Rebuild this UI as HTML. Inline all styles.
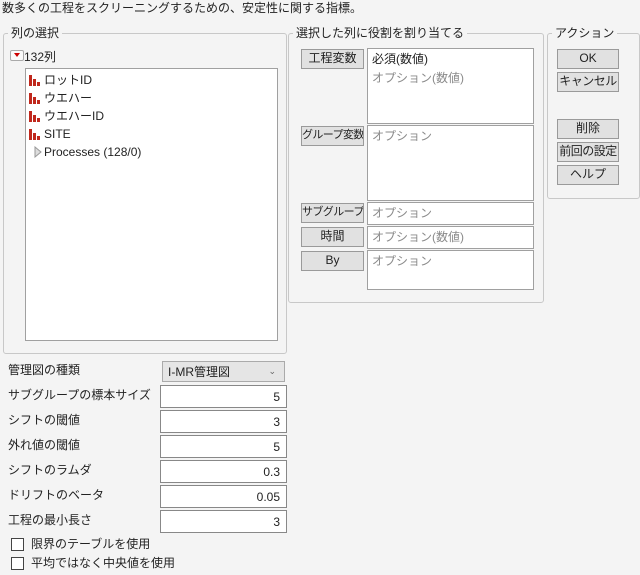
<!DOCTYPE html>
<html><head><meta charset="utf-8"><style>
*{box-sizing:border-box;margin:0;padding:0}
body{width:640px;height:575px;background:#f4f4f4;font-family:"Liberation Sans","Noto Sans CJK JP",sans-serif;font-size:12px;color:#222;position:relative;overflow:hidden}
.a{position:absolute;white-space:nowrap}
.grp{position:absolute;border:1px solid #c8c8c8;border-radius:3px}
.lg{position:absolute;background:#f4f4f4;padding:0 3px;top:-9px;left:4px;line-height:16px;white-space:nowrap}
.box{position:absolute;background:#fff;border:1px solid #a0a0a0}
.btn{position:absolute;background:#e1e1e1;border:1px solid #9a9a9a;text-align:center;line-height:17px;font-size:12px;white-space:nowrap;overflow:hidden}
.opt{color:#8a8a8a;padding:1px 4px;line-height:18px;white-space:nowrap}
.lbl{position:absolute;left:8px;line-height:16px;white-space:nowrap}
.fld{position:absolute;left:160px;width:127px;height:23px;background:#fff;border:1px solid #888;text-align:right;padding:3px 6px;line-height:16px}
.cb{position:absolute;left:11px;width:13px;height:13px;border:1px solid #444;background:#fff}
.ic{position:absolute;left:3px;width:12px;height:12px}
.row{position:absolute;left:0;height:18px;line-height:18px;white-space:nowrap;width:240px}
.row span{white-space:nowrap}
</style></head><body>
<div class="a" style="left:2px;top:0;line-height:17px">数多くの工程をスクリーニングするための、安定性に関する指標。</div>

<div class="grp" style="left:3px;top:33px;width:284px;height:321px">
<div class="lg">列の選択</div>
<div class="a" style="left:6px;top:16px;width:14px;height:11px;border:1px solid #aaa;border-radius:2px;background:#fafafa"><div style="position:absolute;left:3px;top:2px;border-left:3px solid transparent;border-right:3px solid transparent;border-top:4px solid #c00"></div></div>
<div class="a" style="left:20px;top:15px;line-height:16px">132列</div>
<div class="box" style="left:21px;top:34px;width:253px;height:273px">
<div class="row" style="top:2px"><svg class="ic" style="top:3px" viewBox="0 0 12 12"><rect x="0" y="1" width="3" height="11" fill="#c0281c"/><rect x="4" y="5" width="3" height="7" fill="#c0281c"/><rect x="8" y="8" width="3" height="4" fill="#c0281c"/></svg><span style="position:absolute;left:18px">ロットID</span></div>
<div class="row" style="top:20px"><svg class="ic" style="top:3px" viewBox="0 0 12 12"><rect x="0" y="1" width="3" height="11" fill="#c0281c"/><rect x="4" y="5" width="3" height="7" fill="#c0281c"/><rect x="8" y="8" width="3" height="4" fill="#c0281c"/></svg><span style="position:absolute;left:18px">ウエハー</span></div>
<div class="row" style="top:38px"><svg class="ic" style="top:3px" viewBox="0 0 12 12"><rect x="0" y="1" width="3" height="11" fill="#c0281c"/><rect x="4" y="5" width="3" height="7" fill="#c0281c"/><rect x="8" y="8" width="3" height="4" fill="#c0281c"/></svg><span style="position:absolute;left:18px">ウエハーID</span></div>
<div class="row" style="top:56px"><svg class="ic" style="top:3px" viewBox="0 0 12 12"><rect x="0" y="1" width="3" height="11" fill="#c0281c"/><rect x="4" y="5" width="3" height="7" fill="#c0281c"/><rect x="8" y="8" width="3" height="4" fill="#c0281c"/></svg><span style="position:absolute;left:18px">SITE</span></div>
<div class="row" style="top:74px"><svg class="ic" style="top:3px;left:8px;width:8px" viewBox="0 0 8 12"><path d="M1 1 L7 6 L1 11 Z" fill="#ddd" stroke="#999"/></svg><span style="position:absolute;left:18px">Processes (128/0)</span></div>
</div>
</div>

<div class="grp" style="left:288px;top:33px;width:256px;height:270px">
<div class="lg">選択した列に役割を割り当てる</div>
</div>
<div class="btn" style="left:301px;top:49px;width:63px;height:20px">工程変数</div>
<div class="box" style="left:367px;top:48px;width:167px;height:76px"><div style="padding:1px 4px;line-height:18px">必須(数値)</div><div class="opt" style="padding-top:0">オプション(数値)</div></div>
<div class="btn" style="left:301px;top:126px;width:63px;height:20px;font-size:11px;letter-spacing:-0.6px">グループ変数</div>
<div class="box" style="left:367px;top:125px;width:167px;height:76px"><div class="opt">オプション</div></div>
<div class="btn" style="left:301px;top:203px;width:63px;height:20px;font-size:11px;letter-spacing:-0.6px">サブグループ</div>
<div class="box" style="left:367px;top:202px;width:167px;height:23px"><div class="opt">オプション</div></div>
<div class="btn" style="left:301px;top:227px;width:63px;height:20px">時間</div>
<div class="box" style="left:367px;top:226px;width:167px;height:23px"><div class="opt">オプション(数値)</div></div>
<div class="btn" style="left:301px;top:251px;width:63px;height:20px">By</div>
<div class="box" style="left:367px;top:250px;width:167px;height:40px"><div class="opt">オプション</div></div>

<div class="grp" style="left:547px;top:33px;width:93px;height:166px">
<div class="lg">アクション</div>
</div>
<div class="btn" style="left:557px;top:49px;width:62px;height:20px">OK</div>
<div class="btn" style="left:557px;top:72px;width:62px;height:20px;letter-spacing:-0.5px">キャンセル</div>
<div class="btn" style="left:557px;top:119px;width:62px;height:20px">削除</div>
<div class="btn" style="left:557px;top:142px;width:62px;height:20px;letter-spacing:-0.5px">前回の設定</div>
<div class="btn" style="left:557px;top:165px;width:62px;height:20px">ヘルプ</div>

<div class="lbl" style="top:362px">管理図の種類</div>
<div class="a" style="left:162px;top:361px;width:123px;height:21px;background:#e5e5e5;border:1px solid #aaa;padding:2px 5px;line-height:16px">I-MR管理図<span style="position:absolute;right:8px;top:1px;font-size:9px;color:#666">&#8964;</span></div>
<div class="lbl" style="top:387px">サブグループの標本サイズ</div><div class="fld" style="top:385px">5</div>
<div class="lbl" style="top:412px">シフトの閾値</div><div class="fld" style="top:410px">3</div>
<div class="lbl" style="top:437px">外れ値の閾値</div><div class="fld" style="top:435px">5</div>
<div class="lbl" style="top:462px">シフトのラムダ</div><div class="fld" style="top:460px">0.3</div>
<div class="lbl" style="top:487px">ドリフトのベータ</div><div class="fld" style="top:485px">0.05</div>
<div class="lbl" style="top:512px">工程の最小長さ</div><div class="fld" style="top:510px">3</div>
<div class="cb" style="top:538px"></div><div class="a" style="left:31px;top:536px;line-height:16px">限界のテーブルを使用</div>
<div class="cb" style="top:557px"></div><div class="a" style="left:31px;top:555px;line-height:16px">平均ではなく中央値を使用</div>
</body></html>
